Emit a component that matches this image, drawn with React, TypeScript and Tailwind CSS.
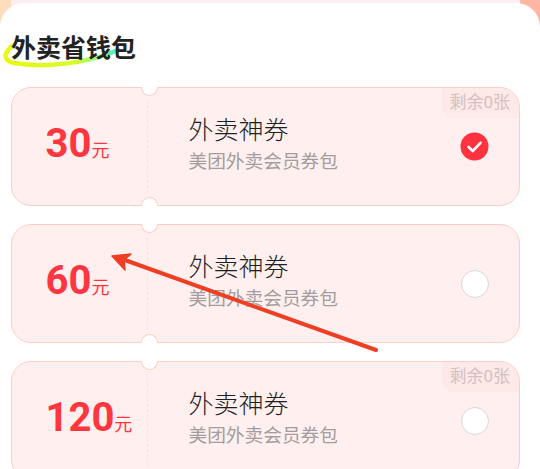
const font = { fontFamily: 'Roboto, "Noto Sans CJK SC", sans-serif' };

interface CouponProps {
    amount: number;
    selected?: boolean;
    tag?: boolean;
}

function Coupon({ amount, selected = false, tag = false }: CouponProps) {
    return (
        <div className="relative flex h-[119px] shrink-0 items-center rounded-[20px] border border-[#fbcfc6] bg-[#fff0ef]">
            {/* ticket notches */}
            <div className="absolute -top-px left-[129px] h-[9px] w-[17px] rounded-b-full border border-t-0 border-[#fbcfc6] bg-white" />
            <div className="absolute -bottom-px left-[129px] h-[9px] w-[17px] rounded-t-full border border-b-0 border-[#fbcfc6] bg-white" />
            <div className="absolute top-[12px] bottom-[12px] left-[135px] border-l border-dashed border-[#f6e3e1]" />

            {tag && (
                <div className="absolute top-0 right-0 flex h-[30px] w-[77px] items-center justify-end rounded-tr-[19px] rounded-bl-[12px] bg-[#fde9e8] pr-[9px] text-[17px] text-[#d5c0bf]">
                    剩余0张
                </div>
            )}

            <div className="-mt-[6px] flex w-[137px] items-baseline pl-[33.5px] text-[#ff3640]">
                <span className="text-[40px] leading-none font-bold">{amount}</span>
                <span className="text-[18px] leading-none">元</span>
            </div>

            <div className="pl-[39.5px]">
                <div className="-mt-[2px] text-[25px] leading-[30px] font-light text-[#1f1f1f]">外卖神券</div>
                <div className="mt-[3px] text-[18.7px] leading-[26px] text-[#a39d9d]">美团外卖会员券包</div>
            </div>

            {selected ? (
                <svg className="mr-[30px] ml-auto" width="29" height="29" viewBox="0 0 29 29">
                    <circle cx="14.5" cy="14.5" r="14" fill="#ff3340" />
                    <path d="M8.5 15 L12.8 19 L20.5 10.8" fill="none" stroke="#fff" strokeWidth="2.6" strokeLinecap="round" strokeLinejoin="round" />
                </svg>
            ) : (
                <div className="mr-[30px] ml-auto h-[28px] w-[28px] rounded-full border border-[#d8d6d6] bg-white" />
            )}
        </div>
    );
}

export default function App() {
    return (
        <div
            className="relative h-[469px] w-[540px] overflow-hidden bg-[linear-gradient(90deg,#ffdcbc_11px,#fdeef1_11px,#fdeef1_520px,#ffb7a3_520px)]"
            style={font}
        >
            <div className="mt-[3px] flex h-[466px] flex-col rounded-t-[24px] bg-white pr-[20px] pl-[11px]">
                <div className="relative mt-[30px] mb-[23px] h-[31px] shrink-0">
                    {/* highlight stroke behind the heading */}
                    <svg className="absolute top-[9px] -left-[9px]" width="125" height="32" viewBox="0 0 125 32">
                        <defs>
                            <linearGradient id="swoosh" x1="0" y1="0" x2="1" y2="0">
                                <stop offset="0" stopColor="#e8f90f" />
                                <stop offset="0.6" stopColor="#d8fb2e" />
                                <stop offset="0.85" stopColor="#8dfb86" />
                                <stop offset="1" stopColor="#3df0d0" />
                            </linearGradient>
                        </defs>
                        <path d="M10 4 C2 11 0 18 12 21 C40 26 85 22 116 8" fill="none" stroke="url(#swoosh)" strokeWidth="4.5" strokeLinecap="round" />
                    </svg>
                    <h2 className="relative text-[25px] leading-[31px] font-bold text-[#222222]">外卖省钱包</h2>
                </div>
                <div className="flex flex-col gap-[18px]">
                    <Coupon amount={30} selected tag />
                    <Coupon amount={60} />
                    <Coupon amount={120} tag />
                </div>
            </div>

            {/* annotation arrow drawn over the screenshot */}
            <svg className="absolute top-0 left-0" width="540" height="469" viewBox="0 0 540 469">
                <path d="M376 350 L122 259" stroke="#ee3f25" strokeWidth="4" strokeLinecap="round" fill="none" />
                <path d="M112 256 L131 254 L124 260 L125 270 Z" fill="#ee3f25" stroke="#ee3f25" strokeWidth="1.5" strokeLinejoin="round" />
            </svg>
        </div>
    );
}
